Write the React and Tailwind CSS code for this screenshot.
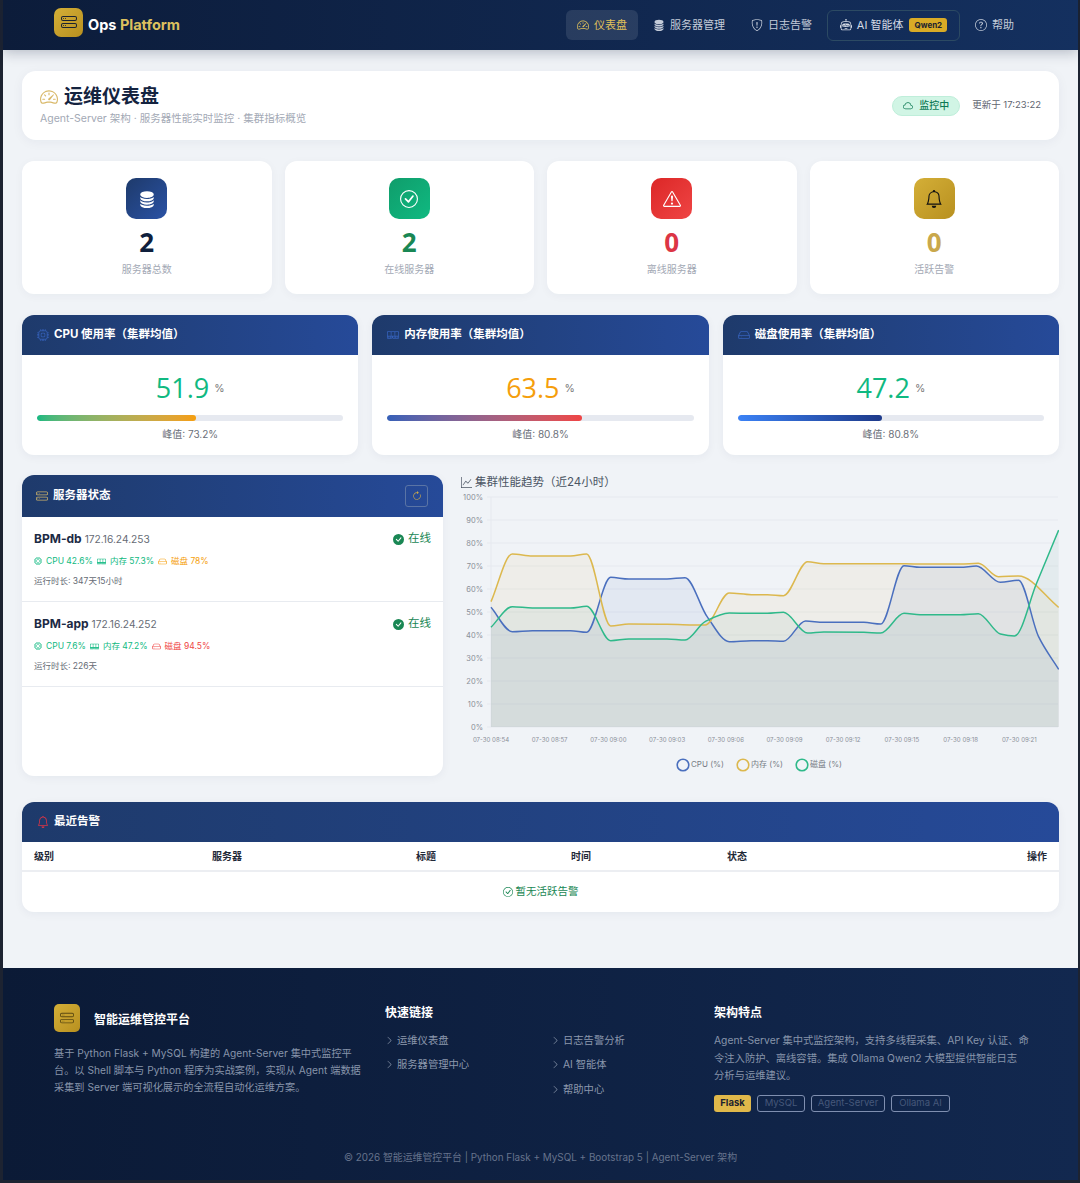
import {
  BsArrowClockwise,
  BsBell,
  BsCheckCircle,
  BsCheckCircleFill,
  BsChevronRight,
  BsCloud,
  BsCpu,
  BsDatabaseFill,
  BsExclamationTriangle,
  BsGraphUp,
  BsHdd,
  BsHddStack,
  BsMemory,
  BsQuestionCircle,
  BsRobot,
  BsShieldExclamation,
  BsSpeedometer2,
} from 'react-icons/bs';

const stats = [
  { label: '服务器总数', value: '2', Icon: BsDatabaseFill, box: 'bg-gradient-to-br from-[#1e3a6b] to-[#2a52a5] text-white', num: 'text-[#0f1f3d]' },
  { label: '在线服务器', value: '2', Icon: BsCheckCircle, box: 'bg-gradient-to-br from-[#0f9d6b] to-[#10b981] text-white', num: 'text-[#198754]' },
  { label: '离线服务器', value: '0', Icon: BsExclamationTriangle, box: 'bg-gradient-to-br from-[#dc2626] to-[#ef4444] text-white', num: 'text-[#dc3545]' },
  { label: '活跃告警', value: '0', Icon: BsBell, box: 'bg-gradient-to-br from-[#d4af37] to-[#b8901f] text-[#111]', num: 'text-[#c9a84c]' },
];

const gauges = [
  { title: 'CPU 使用率（集群均值）', value: 51.9, peak: '73.2%', Icon: BsCpu, num: 'text-[#10b981]', bar: 'bg-gradient-to-r from-[#10b981] to-[#f59e0b]' },
  { title: '内存使用率（集群均值）', value: 63.5, peak: '80.8%', Icon: BsMemory, num: 'text-[#f59e0b]', bar: 'bg-gradient-to-r from-[#3560b8] to-[#ef4444]' },
  { title: '磁盘使用率（集群均值）', value: 47.2, peak: '80.8%', Icon: BsHdd, num: 'text-[#10b981]', bar: 'bg-gradient-to-r from-[#3b82f6] to-[#1e3a8a]' },
];

const servers = [
  {
    name: 'BPM-db',
    ip: '172.16.24.253',
    uptime: '运行时长: 347天15小时',
    cpu: 'CPU 42.6%',
    mem: '内存 57.3%',
    disk: '磁盘 78%',
    diskColor: 'text-[#f59e0b]',
  },
  {
    name: 'BPM-app',
    ip: '172.16.24.252',
    uptime: '运行时长: 226天',
    cpu: 'CPU 7.6%',
    mem: '内存 47.2%',
    disk: '磁盘 94.5%',
    diskColor: 'text-[#ef4444]',
  },
];

// points read off the reference, in crop coordinates
const toPage = ([x, y]) => [450 + x / 2.489, 470 + y / 3];

const cpuLine = [[102,412],[155,485],[205,482],[300,482],[340,487],[400,322],[445,327],[540,327],[585,323],[640,440],[695,515],[750,512],[790,512],[830,514],[885,453],[930,457],[1030,457],[1072,462],[1130,287],[1170,292],[1270,292],[1310,288],[1370,337],[1415,331],[1465,500],[1515,598]].map(toPage);
const memLine = [[102,395],[155,252],[205,258],[300,258],[340,252],[400,468],[445,462],[540,463],[635,465],[695,369],[750,374],[790,374],[830,377],[890,275],[930,281],[1100,281],[1170,282],[1270,282],[1315,280],[1365,320],[1415,318],[1515,412]].map(toPage);
const diskLine = [[102,472],[155,410],[205,414],[300,414],[340,409],[400,512],[445,507],[540,507],[585,510],[635,455],[695,429],[750,430],[790,430],[830,427],[890,489],[930,486],[1030,487],[1072,489],[1130,430],[1170,434],[1270,434],[1315,431],[1370,492],[1405,498],[1460,340],[1515,180]].map(toPage);

// monotone cubic, the lines in the reference don't overshoot their plateaus
function smoothPath(points) {
  const slopes = points.slice(1).map((p, i) => (p[1] - points[i][1]) / (p[0] - points[i][0]));
  const tangents = points.map((_, i) => {
    if (i === 0) return slopes[0];
    if (i === points.length - 1) return slopes[slopes.length - 1];
    const a = slopes[i - 1];
    const b = slopes[i];
    if (a * b <= 0) return 0;
    return (2 * a * b) / (a + b);
  });
  let d = `M${points[0][0]} ${points[0][1]}`;
  for (let i = 0; i < points.length - 1; i++) {
    const [x1, y1] = points[i];
    const [x2, y2] = points[i + 1];
    const h = (x2 - x1) / 3;
    d += `C${x1 + h} ${y1 + tangents[i] * h} ${x2 - h} ${y2 - tangents[i + 1] * h} ${x2} ${y2}`;
  }
  return d;
}

const series = [
  { points: cpuLine, stroke: '#4a6fbe', fill: 'rgba(58,100,190,0.08)' },
  { points: memLine, stroke: '#dcb84e', fill: 'rgba(212,175,55,0.07)' },
  { points: diskLine, stroke: '#2fb98a', fill: 'rgba(40,120,100,0.06)' },
];

const yTicks = [0, 10, 20, 30, 40, 50, 60, 70, 80, 90, 100];
const xTicks = ['08:54', '08:57', '09:00', '09:03', '09:06', '09:09', '09:12', '09:15', '09:18', '09:21'];
const legend = [
  { x: 683, label: 'CPU (%)', color: '#4a6fbe' },
  { x: 743, label: '内存 (%)', color: '#dcb84e' },
  { x: 802, label: '磁盘 (%)', color: '#2fb98a' },
];

function TrendChart() {
  return (
    <svg viewBox="461 490 598 286" className="block h-[286px] w-[598px]">
      {yTicks.map((tick) => {
        const y = 727 - tick * 2.3;
        return (
          <g key={tick}>
            <line x1="487" x2="1058" y1={y} y2={y} stroke="#e6e9ef" strokeWidth="1" />
            <text x="483" y={y + 3} textAnchor="end" fontSize="7.5" fill="#8a8f98">{tick}%</text>
          </g>
        );
      })}
      <line x1="491" x2="491" y1="497" y2="727" stroke="#e6e9ef" />
      {series.map((s) => (
        <path key={s.stroke} d={`${smoothPath(s.points)}L1058.7 727L491 727Z`} fill={s.fill} />
      ))}
      {series.map((s) => (
        <path key={s.stroke} d={smoothPath(s.points)} fill="none" stroke={s.stroke} strokeWidth="1.5" />
      ))}
      {xTicks.map((tick, index) => (
        <text key={tick} x={491 + index * 58.7} y="741.5" textAnchor="middle" fontSize="6.1" fill="#8a8f98">07-30 {tick}</text>
      ))}
      {legend.map((item) => (
        <g key={item.label}>
          <circle cx={item.x} cy="765" r="5.8" fill="none" stroke={item.color} strokeWidth="1.6" />
          <text x={item.x + 8} y="767" fontSize="8" fill="#777c85">{item.label}</text>
        </g>
      ))}
    </svg>
  );
}

function NavItem({ Icon, label, active }) {
  return (
    <a className={`flex h-[30px] items-center gap-[5px] rounded-md px-[11px] text-[11px] ${active ? 'bg-white/10 text-[#e0c15a]' : 'text-[#c4ccd9]'}`}>
      <Icon className="h-[12px] w-[12px]" />
      {label}
    </a>
  );
}

function PanelHeader({ Icon, iconColor, title, className = '', children }) {
  return (
    <div className={`flex items-center justify-between rounded-t-[12px] bg-gradient-to-r from-[#1e3a6b] to-[#264a99] ${className}`}>
      <div className="flex items-center gap-[5px] text-[11.5px] font-bold text-white">
        <Icon className={`h-[12px] w-[12px] ${iconColor}`} />
        {title}
      </div>
      {children}
    </div>
  );
}

function FooterLink({ label }) {
  return (
    <a className="flex h-[24.5px] items-center gap-[3px] text-[10.3px] text-[#8c98ad]">
      <BsChevronRight className="h-[9px] w-[9px]" />
      {label}
    </a>
  );
}

export default function App() {
  return (
    <div className="h-[1183px] overflow-hidden bg-[#1d2331] pb-[3px] pl-[3px] pr-[2px] font-['Inter','Noto_Sans_CJK_SC',sans-serif]">
      <nav className="relative z-10 flex h-[50px] items-center justify-between bg-gradient-to-r from-[#0c1c3a] to-[#14305f] pl-[51px] pr-[53px] shadow-[0_3px_12px_rgba(15,30,60,0.25)]">
        <div className="flex items-center gap-[5px]">
          <span className="mb-[6px] flex h-[29px] w-[29px] items-center justify-center rounded-[7px] bg-gradient-to-br from-[#d4af37] to-[#b8901f] text-[#1b2230]">
            <BsHddStack className="h-[16px] w-[16px]" />
          </span>
          <span className="text-[14.5px] font-bold text-white">
            Ops <span className="text-[#dcc05e]">Platform</span>
          </span>
        </div>
        <div className="flex items-center gap-[4px]">
          <NavItem Icon={BsSpeedometer2} label="仪表盘" active />
          <NavItem Icon={BsDatabaseFill} label="服务器管理" />
          <NavItem Icon={BsShieldExclamation} label="日志告警" />
          <a className="flex h-[31px] w-[133px] items-center justify-center gap-[5px] rounded-md border border-[#2c4a63] text-[11px] text-[#d5dbe5]">
            <BsRobot className="h-[12px] w-[12px]" />
            AI 智能体
            <span className="ml-[1px] rounded-[3px] bg-[#d9ab26] px-[5px] py-[1px] text-[8px] font-bold text-[#1b2230]">Qwen2</span>
          </a>
          <NavItem Icon={BsQuestionCircle} label="帮助" />
        </div>
      </nav>

      <main className="h-[918px] bg-[#f0f3f7] px-[19px] pt-[21px]">
        <section className="flex h-[69px] items-center justify-between rounded-[14px] bg-white pl-[18px] pr-[18px] shadow-[0_2px_12px_rgba(20,40,80,0.05)]">
          <div className="pb-[1px]">
            <h1 className="flex items-center gap-[6px] text-[19px] font-bold leading-[24px] text-[#14233f]">
              <BsSpeedometer2 className="h-[18px] w-[18px] text-[#d9b96a]" />
              运维仪表盘
            </h1>
            <p className="mt-[3px] text-[10.5px] leading-[14px] text-[#a3a9b5]">Agent-Server 架构 · 服务器性能实时监控 · 集群指标概览</p>
          </div>
          <div className="flex items-center gap-[12px]">
            <span className="flex h-[20px] w-[68px] items-center justify-center gap-[6px] rounded-full border border-[#bfeeda] bg-[#d1f5e5] text-[10px] font-medium text-[#0f7a55]">
              <BsCloud className="h-[10px] w-[10px]" />
              监控中
            </span>
            <span className="text-[9.5px] text-[#5f6570]">更新于 17:23:22</span>
          </div>
        </section>

        <section className="mt-[21px] grid grid-cols-4 gap-[13px]">
          {stats.map(({ label, value, Icon, box, num }) => (
            <div key={label} className="flex h-[133px] flex-col items-center rounded-[12px] bg-white pt-[17px] shadow-[0_2px_10px_rgba(20,40,80,0.04)]">
              <span className={`flex h-[41px] w-[41px] items-center justify-center rounded-[10px] ${box}`}>
                <Icon className="h-[18px] w-[18px]" />
              </span>
              <div className={`mt-[5px] font-['Open_Sans',sans-serif] text-[26px] font-bold leading-[36px] ${num}`}>{value}</div>
              <div className="mt-[2px] text-[10px] leading-[14px] text-[#a3a9b5]">{label}</div>
            </div>
          ))}
        </section>

        <section className="mt-[21px] grid grid-cols-3 gap-[14px]">
          {gauges.map(({ title, value, peak, Icon, num, bar }) => (
            <div key={title} className="h-[140px] rounded-[12px] bg-white shadow-[0_2px_10px_rgba(20,40,80,0.05)]">
              <PanelHeader Icon={Icon} iconColor="text-[#3560b8]" title={title} className="h-[40px] px-[15px]" />
              <div className="px-[15px] pt-[14px]">
                <div className="flex items-start justify-center gap-[5px]">
                  <span className={`font-['Open_Sans',sans-serif] text-[27px] leading-[38px] ${num}`}>{value}</span>
                  <span className="mt-[13px] text-[10.5px] leading-[14px] text-[#777]">%</span>
                </div>
                <div className="mt-[8px] h-[6px] overflow-hidden rounded-full bg-[#e6e9f0]">
                  <div className={`h-full rounded-full ${bar}`} style={{ width: `${value}%` }} />
                </div>
                <div className="mt-[6px] text-center text-[10px] leading-[14px] text-[#6b7079]">峰值: {peak}</div>
              </div>
            </div>
          ))}
        </section>

        <section className="mt-[20px] flex gap-[18px]">
          <div className="h-[301px] w-[421px] rounded-[12px] bg-white shadow-[0_2px_10px_rgba(20,40,80,0.05)]">
            <PanelHeader Icon={BsHddStack} iconColor="text-[#cdb26a]" title="服务器状态" className="h-[42px] pl-[14px] pr-[15px]">
              <button type="button" className="flex h-[22px] w-[23px] items-center justify-center rounded-[3px] border border-[#5a74a5] text-[#c9a84c]">
                <BsArrowClockwise className="h-[10px] w-[10px]" />
              </button>
            </PanelHeader>
            {servers.map((server) => (
              <div key={server.name} className="h-[85px] border-b border-[#e8ebf0] px-[12px] pt-[13px]">
                <div className="flex items-center justify-between">
                  <div className="text-[10.2px] leading-[18px] text-[#666b75]">
                    <span className="mr-[3px] text-[12px] font-bold text-[#1c2a44]">{server.name}</span>
                    {server.ip}
                  </div>
                  <span className="flex items-center gap-[4px] text-[11.5px] text-[#198754]">
                    <BsCheckCircleFill className="h-[11px] w-[11px]" />
                    在线
                  </span>
                </div>
                <div className="mt-[7px] flex items-center gap-[4px] text-[8.5px] leading-[12px] text-[#10b981]">
                  <span className="flex items-center gap-[4px]"><BsCpu className="h-[8px] w-[8px]" />{server.cpu}</span>
                  <span className="flex items-center gap-[4px]"><BsMemory className="h-[9px] w-[9px]" />{server.mem}</span>
                  <span className={`flex items-center gap-[4px] ${server.diskColor}`}><BsHdd className="h-[9px] w-[9px]" />{server.disk}</span>
                </div>
                <div className="mt-[8px] text-[8.5px] leading-[13px] text-[#666b75]">{server.uptime}</div>
              </div>
            ))}
          </div>
          <div className="w-[598px]">
            <div className="flex h-[15px] items-center gap-[3px] text-[11.5px] text-[#4b5563]">
              <BsGraphUp className="h-[11px] w-[11px]" />
              集群性能趋势（近24小时）
            </div>
            <TrendChart />
          </div>
        </section>

        <section className="mt-[26px] h-[110px] rounded-[12px] bg-white shadow-[0_2px_10px_rgba(20,40,80,0.05)]">
          <PanelHeader Icon={BsBell} iconColor="text-[#dc3545]" title="最近告警" className="h-[40px] px-[15px]" />
          <div className="grid h-[30px] grid-cols-[178px_204px_155px_156px_1fr] items-center border-b-2 border-[#eceef2] px-[12px] text-[10px] font-bold text-[#1f2937]">
            <span>级别</span>
            <span>服务器</span>
            <span>标题</span>
            <span>时间</span>
            <span className="flex justify-between">状态<span>操作</span></span>
          </div>
          <div className="flex h-[40px] items-center justify-center gap-[3px] text-[10.5px] text-[#198754]">
            <BsCheckCircle className="h-[10px] w-[10px]" />
            暂无活跃告警
          </div>
        </section>
      </main>

      <footer className="h-[212px] bg-gradient-to-r from-[#0b1a36] to-[#12284f] pl-[51px] pr-[50px] pt-[36px]">
        <div className="grid h-[146px] grid-cols-[331px_329px_1fr]">
          <div>
            <div className="flex items-center gap-[14px]">
              <span className="flex h-[28px] w-[26px] items-center justify-center rounded-[5px] bg-gradient-to-br from-[#d4af37] to-[#b8901f] text-[#5c4a12]">
                <BsHddStack className="h-[14px] w-[14px]" />
              </span>
              <span className="pt-[4px] text-[12px] font-bold text-white">智能运维管控平台</span>
            </div>
            <p className="mt-[13px] w-[312px] text-[10.2px] leading-[17.2px] text-[#8794aa]">
              基于 Python Flask + MySQL 构建的 Agent-Server 集中式监控平台。以 Shell 脚本与 Python 程序为实战案例，实现从 Agent 端数据采集到 Server 端可视化展示的全流程自动化运维方案。
            </p>
          </div>
          <div>
            <h3 className="mt-[1px] text-[12px] font-bold leading-[16px] text-white">快速链接</h3>
            <div className="mt-[7px] grid grid-cols-[166px_1fr]">
              <div>
                <FooterLink label="运维仪表盘" />
                <FooterLink label="服务器管理中心" />
              </div>
              <div>
                <FooterLink label="日志告警分析" />
                <FooterLink label="AI 智能体" />
                <FooterLink label="帮助中心" />
              </div>
            </div>
          </div>
          <div>
            <h3 className="mt-[1px] text-[12px] font-bold leading-[16px] text-white">架构特点</h3>
            <p className="mt-[11px] w-[325px] text-[10.3px] leading-[17.5px] text-[#8794aa]">
              Agent-Server 集中式监控架构，支持多线程采集、API Key 认证、命<br />令注入防护、离线容错。集成 Ollama Qwen2 大模型提供智能日志<br />分析与运维建议。
            </p>
            <div className="mt-[10px] flex items-center gap-[6px] text-[9.5px]">
              <span className="flex h-[17px] w-[37px] items-center justify-center rounded-[3px] bg-[#e0b84a] font-bold text-[#1b2230]">Flask</span>
              <span className="flex h-[17px] w-[48px] items-center justify-center rounded-[3px] border border-[#7f8fb0] text-[#46587a]">MySQL</span>
              <span className="flex h-[17px] w-[74px] items-center justify-center rounded-[3px] border border-[#7f8fb0] text-[#46587a]">Agent-Server</span>
              <span className="flex h-[17px] w-[59px] items-center justify-center rounded-[3px] border border-[#7f8fb0] text-[#46587a]">Ollama AI</span>
            </div>
          </div>
        </div>
        <p className="-ml-[51px] -mr-[50px] text-center text-[9.9px] text-[#66738c]">© 2026 智能运维管控平台 | Python Flask + MySQL + Bootstrap 5 | Agent-Server 架构</p>
      </footer>
    </div>
  );
}
